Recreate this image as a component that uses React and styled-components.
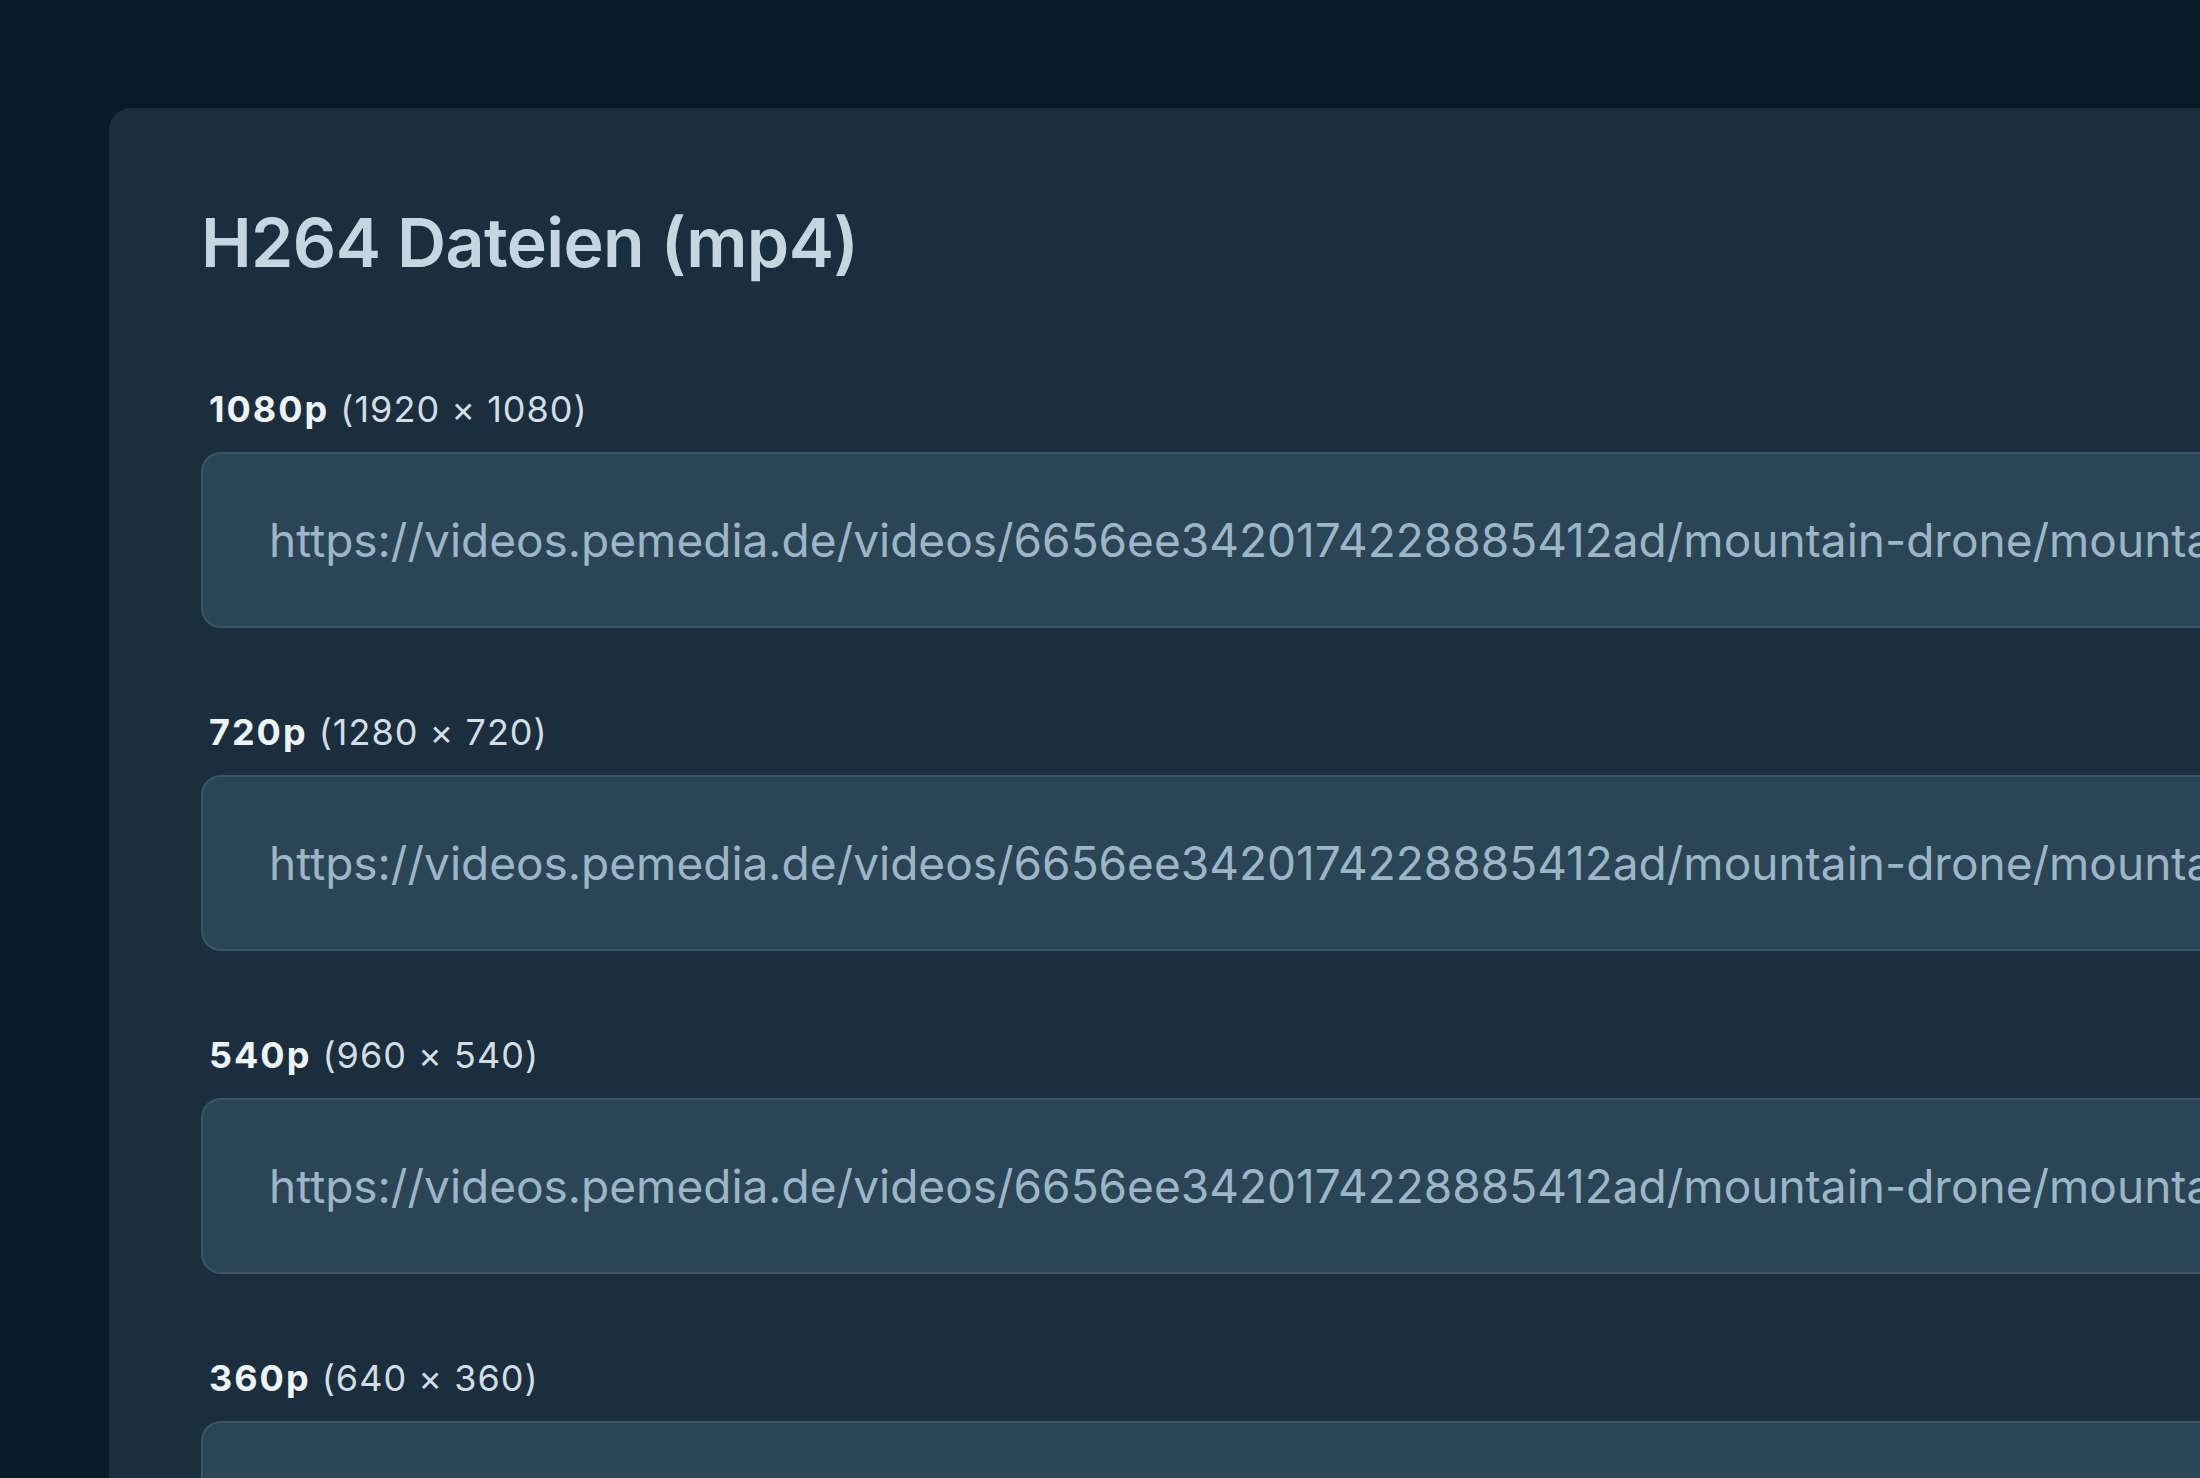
import React from "react";
import styled, { createGlobalStyle } from "styled-components";

const Global = createGlobalStyle`
  html, body {
    margin: 0;
    padding: 0;
    background: #0a1a27;
    overflow: hidden;
    height: 1478px;
  }
  body {
    font-family: Inter, "Noto Sans", "Liberation Sans", sans-serif;
  }
`;

const Page = styled.div`
  padding: 108px 0 0 109px;
  width: 2600px;
`;

const Card = styled.section`
  background: #1a2e3e;
  border-radius: 22px;
  padding: 92px;
  min-height: 1500px;
  box-sizing: border-box;
  display: flex;
  flex-direction: column;
`;

const Title = styled.h2`
  margin: 0 0 100px 0;
  font-size: 68px;
  line-height: 84px;
  font-weight: 600;
  color: #c6d6e1;
  letter-spacing: -0.6px;
`;

const Field = styled.div`
  display: flex;
  flex-direction: column;
  gap: 17px;
  margin-bottom: 79px;
`;

const Label = styled.label`
  padding-left: 8px;
  font-size: 36px;
  line-height: 51px;
  color: #d3dde4;
  font-weight: 400;
  letter-spacing: 1px;
`;

const Res = styled.strong`
  font-weight: 700;
  color: #eef3f6;
  letter-spacing: 2px;
`;

const UrlBox = styled.input`
  box-sizing: border-box;
  height: 176px;
  width: 100%;
  padding: 0 66px;
  background: #2b4557;
  border: 2px solid #3a5567;
  border-radius: 20px;
  font-family: Inter, "Noto Sans", "Liberation Sans", sans-serif;
  font-size: 46px;
  letter-spacing: 0;
  color: #9cb6c7;
  outline: none;
`;

const base =
  "https://videos.pemedia.de/videos/6656ee3420174228885412ad/mountain-drone/mountain-drone";

const files = [
  { name: "1080p", size: "1920 × 1080" },
  { name: "720p", size: "1280 × 720" },
  { name: "540p", size: "960 × 540" },
  { name: "360p", size: "640 × 360" },
];

export default function App() {
  return (
    <>
      <Global />
      <Page>
        <Card>
          <Title>H264 Dateien (mp4)</Title>
          {files.map((f) => (
            <Field key={f.name}>
              <Label>
                <Res>{f.name}</Res> ({f.size})
              </Label>
              <UrlBox readOnly value={`${base}-${f.name}.mp4`} />
            </Field>
          ))}
        </Card>
      </Page>
    </>
  );
}
